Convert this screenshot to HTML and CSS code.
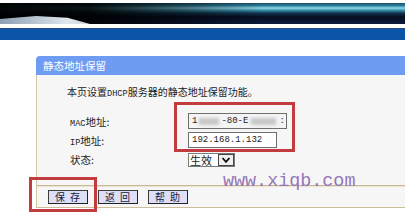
FILE: index.html
```html
<!DOCTYPE html>
<html lang="zh-CN">
<head>
<meta charset="utf-8">
<title>静态地址保留</title>
<link rel="stylesheet" href="styles.css">
</head>
<body>
<div class="stage">
  <div class="banner"><div class="water"></div></div>
  <div class="bluebar"></div>
  <div class="panel">
    <div class="panel-head">静态地址保留</div>
    <div class="panel-body">
      <div class="desc">本页设置<span class="en">DHCP</span>服务器的静态地址保留功能。</div>
      <div class="form">
        <div class="label"><span><span class="en">MAC</span>地址:</span></div>
        <div class="field"><div class="input mac"><span class="en">1</span><span class="blur b1"></span><span class="en">-80-E</span><span class="blur b2"></span><span class="en">:</span></div></div>
        <div class="label"><span><span class="en">IP</span>地址:</span></div>
        <div class="field"><div class="input ip"><span class="en">192.168.1.132</span></div></div>
        <div class="label"><span>状态:</span></div>
        <div class="field"><div class="select"><span class="sel-text">生效</span><span class="sel-btn"><svg width="10" height="8" viewBox="0 0 10 8"><path d="M1.5 2 L5 5.8 L8.5 2" fill="none" stroke="#111" stroke-width="1.8"/></svg></span></div></div>
      </div>
      <div class="actions">
        <button class="btn">保存</button>
        <button class="btn">返回</button>
        <button class="btn">帮助</button>
      </div>
    </div>
  </div>
  <div class="mark mark-fields"></div>
  <div class="mark mark-save"></div>
  <div class="watermark">www.xiqb.com</div>
</div>
</body>
</html>
```
FILE: styles.css
```css
html, body {
  margin: 0;
  padding: 0;
  background: #ffffff;
}
.stage {
  position: relative;
  width: 405px;
  height: 223px;
  overflow: hidden;
  font-family: "Noto Sans CJK SC", "Liberation Sans", sans-serif;
  font-size: 10px;
  color: #222;
}
.banner {
  position: relative;
  margin-top: 3px;
  height: 21px;
  background:
    linear-gradient(to right, rgba(0,0,0,0.97) 0, rgba(0,0,0,0.9) 22%, rgba(0,0,0,0.45) 45%, rgba(0,0,0,0) 65%),
    linear-gradient(to bottom, #1d4b66 0, #2f86a2 14%, #94d8ea 24%, #3a93ad 34%, #123650 48%, #060d22 66%, #0c1a3c 100%);
}
.water {
  position: absolute;
  left: 0;
  bottom: 0;
  width: 90px;
  height: 9px;
  background: linear-gradient(to right, #8c9fb4 0, #b9c6d3 40%, #dfe6ee 75%, rgba(230,236,242,0.9) 100%);
  clip-path: polygon(0 45%, 40% 10%, 75% 30%, 100% 100%, 0 100%);
}
.bluebar {
  margin-top: 4px;
  height: 12px;
  background: #0a55a8;
  border-top: 1px solid #28507a;
  box-sizing: border-box;
}
.panel {
  margin-top: 16px;
  margin-left: 36px;
  width: 380px;
}
.panel-head {
  height: 19px;
  line-height: 19px;
  background: #6e9cf2;
  border-top-left-radius: 4px;
  color: #fff;
  font-size: 10.5px;
  padding-left: 7px;
}
.panel-body {
  background: #f6f6f6;
  border-left: 1px solid #d6c5a6;
  border-bottom: 1px solid #cdbd9c;
}
.en {
  font-family: "Liberation Mono", monospace;
  font-size: 8.6px;
}
.desc {
  padding: 11px 0 0 30px;
  line-height: 12px;
  font-size: 10px;
}
.form {
  display: grid;
  grid-template-columns: 118px auto;
  row-gap: 3px;
  margin-top: 13px;
  padding-left: 33px;
}
.label {
  display: flex;
  align-items: center;
  font-size: 10.5px;
  white-space: nowrap;
}
.field {
  display: flex;
  align-items: center;
}
.input {
  box-sizing: border-box;
  height: 16px;
  background: #fff;
  border: 1px solid #6e6e6e;
  display: flex;
  align-items: center;
  padding-left: 3px;
  color: #222;
  white-space: nowrap;
  overflow: hidden;
}
.input > * {
  flex-shrink: 0;
}
.input .en {
  font-size: 9px;
}
.mac {
  width: 99px;
  background: #f4f4f4;
}
.ip {
  width: 89px;
}
.blur {
  display: inline-block;
  height: 7px;
  background: #c8c8c8;
  filter: blur(1.5px);
}
.b1 { width: 20px; margin: 0 2px; }
.b2 { width: 25px; margin: 0 3px; }
.select {
  box-sizing: border-box;
  width: 47px;
  height: 14px;
  border: 1px solid #7a7a7a;
  background: #fff;
  display: flex;
  align-items: center;
  margin-top: 2px;
}
.sel-text {
  flex: 1;
  font-size: 11px;
  line-height: 12px;
  padding-left: 1px;
}
.sel-btn {
  box-sizing: border-box;
  width: 16px;
  height: 12px;
  border: 1px solid #444;
  background: #f0f0f0;
  display: flex;
  align-items: center;
  justify-content: center;
}
.actions {
  margin-top: 18px;
  border-top: 1px solid #c9b894;
  box-shadow: inset 0 1px 0 #ece4d2;
  display: flex;
  gap: 10px;
  padding: 4px 0 3px 11px;
}
.btn {
  box-sizing: border-box;
  width: 40px;
  height: 14px;
  padding: 0 0 0 4px;
  margin: 0;
  background: #dcdff6;
  border: 1px solid #3c3c3c;
  border-right-color: #222;
  border-bottom-color: #222;
  font-family: "Noto Sans CJK SC", sans-serif;
  font-size: 10px;
  line-height: 12px;
  letter-spacing: 5px;
  color: #1a1a3a;
}
.mark {
  position: absolute;
  box-sizing: border-box;
  border: 3px solid #c23b3f;
}
.mark-fields {
  left: 174px;
  top: 102px;
  width: 121px;
  height: 50px;
}
.mark-save {
  left: 29px;
  top: 177px;
  width: 68px;
  height: 35px;
}
.watermark {
  position: absolute;
  left: 223px;
  top: 172px;
  font-family: "Liberation Mono", monospace;
  font-size: 18.4px;
  line-height: 20px;
  color: #9477b6;
}
```
